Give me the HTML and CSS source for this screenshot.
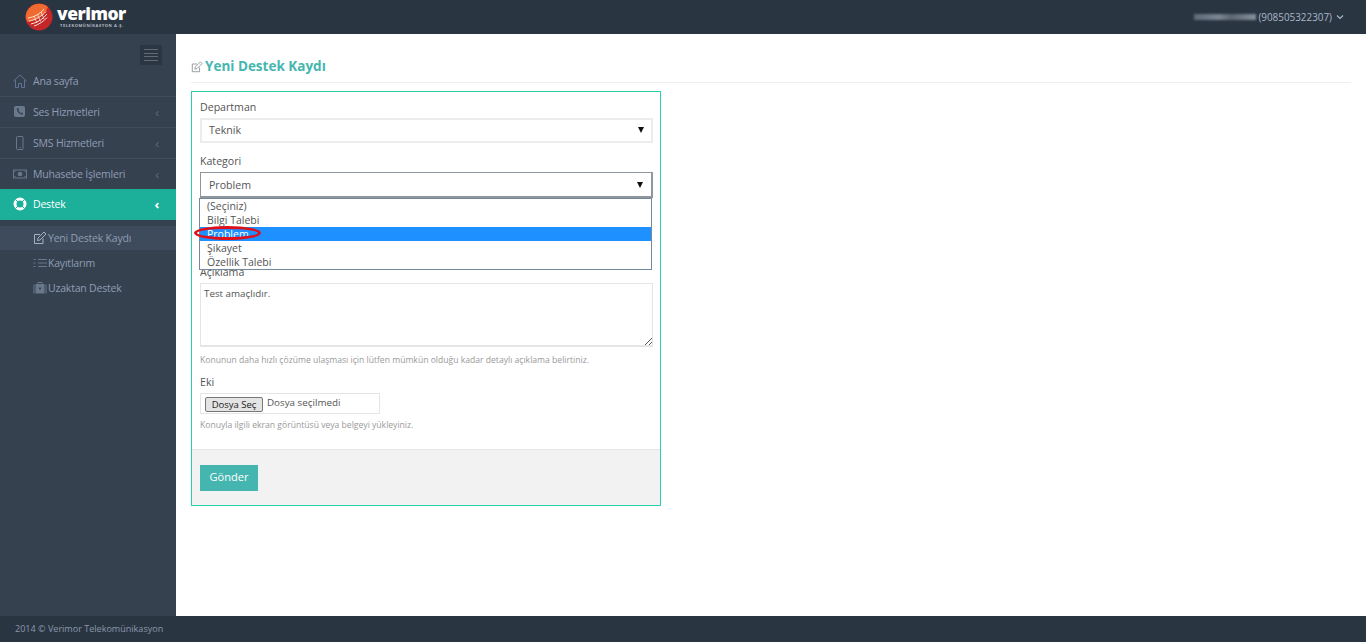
FILE: index.html
```html
<!DOCTYPE html>
<html lang="tr">
<head>
<meta charset="utf-8">
<title>Yeni Destek Kaydı</title>
<link rel="stylesheet" href="styles.css">
</head>
<body>
<header class="topbar">
  <div class="brand">
    <svg class="brand-mark" width="28" height="28" viewBox="0 0 28 28">
      <circle cx="14" cy="14" r="13.5" fill="#c4262a"/>
      <path d="M.8 12C2 5.500 7.500.8 14 .8c3.500 0 6.500 1.200 9 3.200-2 5-5 8-9 10.500-4 2-8 4-11.500 4.500C1 16.500.5 14.500.8 12z" fill="#ee6a30"/>
      <path d="M3 15c6-1 12-4 16-9M4 18c7-1 13-5 17-9.500M6 21c7-1.500 12-5 16-10M9 23c5-1.500 10-5 13-8.500" stroke="#f8e2d2" stroke-width="1" fill="none"/>
      <path d="M9 13l3 7M12.500 11.500l3 7M16 9l3 7" stroke="#f8e2d2" stroke-width=".8" fill="none"/>
    </svg>
    <div class="brand-text">
      <span class="brand-name">verimor</span>
      <span class="brand-sub">TELEKOMÜNİKASYON A.Ş.</span>
    </div>
  </div>
  <div class="account">
    <span class="redacted"></span>
    <span class="phone">(908505322307)</span>
    <svg width="8" height="6" viewBox="0 0 8 6"><path d="M1 1.500 4 4.500 7 1.500" fill="none" stroke="#a9b6c6" stroke-width="1.200"/></svg>
  </div>
</header>
<div class="shell">
  <aside class="sidebar">
    <div class="toggle-row">
      <div class="toggle"><span></span><span></span><span></span><span></span></div>
    </div>
    <nav>
      <a class="nav-item">
        <svg class="nav-icon" viewBox="0 0 14 14"><path d="M.5 7 7 1l6.500 6M2.500 6v7.500h3v-4h3v4h3V6" fill="none" stroke="#5f7396" stroke-width="1"/></svg>
        <span class="nav-label">Ana sayfa</span>
      </a>
      <a class="nav-item">
        <svg class="nav-icon" viewBox="0 0 14 14"><rect x="1" y="1" width="11" height="11" rx="2" fill="#69788a"/><path d="M4 3c-.5 3.500 2.500 7 6 6.500l-.5-2-2 .5-2-2.500 .7-1.800z" fill="#364150"/></svg>
        <span class="nav-label">Ses Hizmetleri</span>
        <span class="chev">‹</span>
      </a>
      <a class="nav-item">
        <svg class="nav-icon" viewBox="0 0 14 14"><rect x="3.500" y=".5" width="6.500" height="13" rx="1" fill="none" stroke="#69788a"/><path d="M6.500 11.500h1" stroke="#69788a"/></svg>
        <span class="nav-label">SMS Hizmetleri</span>
        <span class="chev">‹</span>
      </a>
      <a class="nav-item">
        <svg class="nav-icon" viewBox="0 0 14 14"><rect x=".5" y="3" width="13" height="8" fill="none" stroke="#69788a"/><circle cx="7" cy="7" r="2.300" fill="#69788a"/><path d="M1.500 4.500h1M11.500 4.500h1M1.500 9.500h1M11.500 9.500h1" stroke="#69788a"/></svg>
        <span class="nav-label">Muhasebe İşlemleri</span>
        <span class="chev">‹</span>
      </a>
      <a class="nav-item nav-item-active">
        <svg class="nav-icon" viewBox="0 0 14 14"><circle cx="7" cy="7" r="5" fill="none" stroke="#fff" stroke-width="3"/><path d="M2.500 2.500l2.500 2.500M11.500 2.500 9 5M2.500 11.500 5 9M11.500 11.500 9 9" stroke="#1caf9a" stroke-width="1"/></svg>
        <span class="nav-label">Destek</span>
        <span class="chev">‹</span>
      </a>
    </nav>
    <ul class="subnav">
      <li class="sub-item sub-item-active">
        <svg class="sub-icon" viewBox="0 0 14 14"><path d="M10 7.500V12.500H1.500V3.500H7" fill="none" stroke="#a4b0c0" stroke-width="1"/><path d="M5 7 11 1l2 2-6 6-2.500.5z" fill="none" stroke="#a4b0c0" stroke-width="1"/></svg>
        <span>Yeni Destek Kaydı</span>
      </li>
      <li class="sub-item">
        <svg class="sub-icon" viewBox="0 0 14 14"><path d="M5 3.500h9M5 7h9M5 10.500h9M.5 3.500h2M.5 7h2M.5 10.500h2" stroke="#69788a" stroke-width="1"/></svg>
        <span>Kayıtlarım</span>
      </li>
      <li class="sub-item">
        <svg class="sub-icon" viewBox="0 0 14 14"><rect x="2.500" y="3" width="9" height="9.500" fill="#69788a"/><rect x="5" y="1.500" width="4" height="2" fill="none" stroke="#69788a"/><path d="M1 3.500v9M13 3.500v9" stroke="#69788a"/><rect x="6" y="6.500" width="2" height="2" fill="#364150"/></svg>
        <span>Uzaktan Destek</span>
      </li>
    </ul>
  </aside>
  <main class="content">
    <h1 class="page-title">
      <svg class="title-icon" viewBox="0 0 14 14"><path d="M10 7.500V12.500H1.500V3.500H7" fill="none" stroke="#8a8f94" stroke-width="1"/><path d="M5 7 11 1l2 2-6 6-2.500.5z" fill="none" stroke="#8a8f94" stroke-width="1"/></svg>
      <span>Yeni Destek Kaydı</span>
    </h1>
    <section class="panel">
      <div class="panel-body">
        <div class="field field-dept">
          <div class="label">Departman</div>
          <div class="select"><span>Teknik</span><i class="arrow"></i></div>
        </div>
        <div class="field field-cat">
          <div class="label">Kategori</div>
          <div class="select select-open"><span>Problem</span><i class="arrow"></i></div>
          <ul class="dropdown">
            <li>(Seçiniz)</li>
            <li>Bilgi Talebi</li>
            <li class="selected">Problem</li>
            <li>Şikayet</li>
            <li>Özellik Talebi</li>
          </ul>
          <div class="ring"></div>
        </div>
        <div class="field field-desc">
          <div class="label">Açıklama</div>
          <div class="textarea">Test amaçlıdır.
            <svg class="grip" width="8" height="8" viewBox="0 0 8 8"><path d="M1 8 8 1M5 8 8 5" stroke="#555" stroke-width="1"/></svg>
          </div>
          <p class="help">Konunun daha hızlı çözüme ulaşması için lütfen mümkün olduğu kadar detaylı açıklama belirtiniz.</p>
        </div>
        <div class="field field-file">
          <div class="label">Eki</div>
          <div class="file"><span class="file-btn">Dosya Seç</span><span class="file-name">Dosya seçilmedi</span></div>
          <p class="help help-file">Konuyla ilgili ekran görüntüsü veya belgeyi yükleyiniz.</p>
        </div>
      </div>
      <div class="panel-foot"><span class="btn">Gönder</span></div>
    </section>
  </main>
</div>
<footer class="footer">2014 © Verimor Telekomünikasyon</footer>
</body>
</html>
```
FILE: styles.css
```css
* { box-sizing: border-box; }
html, body { margin: 0; padding: 0; height: 100%; }
body {
  display: flex;
  flex-direction: column;
  height: 642px;
  overflow: hidden;
  font-family: "Open Sans", sans-serif;
  font-size: 11px;
  color: #555;
  background: #fff;
}
.topbar {
  flex: 0 0 34px;
  display: flex;
  align-items: center;
  justify-content: space-between;
  padding: 0 22px 0 25px;
  background: #2a3542;
}
.brand { display: flex; align-items: center; gap: 4px; }
.brand-mark { display: block; }
.brand-text { display: flex; flex-direction: column; margin-top: -2px; }
.brand-name {
  font-size: 17.500px;
  font-weight: 800;
  line-height: 17px;
  color: #fff;
  letter-spacing: -0.5px;
}
.brand-sub {
  width: 70px;
  margin-top: 1px;
  white-space: nowrap;
  font-size: 4px;
  font-weight: 700;
  line-height: 5px;
  letter-spacing: 0.6px;
  color: #b5bcc4;
  padding-left: 3px;
}
.account { display: flex; align-items: center; font-size: 9.900px; color: #a9b6c6; }
.phone { margin-left: 2px; margin-right: 4px; }
.redacted {
  display: block;
  width: 62px;
  height: 6px;
  background: linear-gradient(90deg, #5d6a78, #7b8692 40%, #5c6671 60%, #87919c);
  filter: blur(1px);
}
.shell { flex: 1 1 auto; display: flex; min-height: 0; }
.sidebar { flex: 0 0 176px; background: #364150; }
.toggle-row { display: flex; justify-content: flex-end; padding: 11px 14px 0 0; height: 32px; }
.toggle {
  width: 22px;
  height: 20px;
  padding: 4px 4px;
  display: flex;
  flex-direction: column;
  justify-content: space-between;
  background: #2c3643;
}
.toggle span { display: block; height: 1px; background: #5d6a78; }
.nav-item {
  display: flex;
  align-items: center;
  height: 31px;
  padding: 0 13px;
  border-bottom: 1px solid #414d5c;
  color: #8e9db3;
  font-size: 10.500px;
  letter-spacing: -0.2px;
}
.nav-item:nth-child(4) { border-bottom: 0; height: 30px; }
.nav-icon { width: 14px; height: 14px; flex: none; margin-right: 6px; }
.nav-label { flex: 1; }
.chev { width: 10px; margin-right: 4px; font-size: 13px; line-height: 12px; color: #5c6b7e; text-align: right; }
.nav-item-active {
  height: 31px;
  padding-bottom: 2px;
  background: #1caf9a;
  color: #fff;
  border-bottom: 0;
}
.nav-item-active .chev { color: #fff; font-weight: 700; }
.subnav { list-style: none; margin: 6px 0 0; padding: 0; }
.sub-item {
  display: flex;
  align-items: center;
  height: 24px;
  margin-bottom: 1px;
  padding-left: 33px;
  color: #8e9db3;
  font-size: 10.500px;
  letter-spacing: -0.2px;
}
.sub-item-active { background: #3e4b5c; }
.sub-icon { width: 14px; height: 14px; flex: none; margin-right: 1px; }
.content { flex: 1; min-width: 0; padding: 0 15px; }
.page-title {
  display: flex;
  align-items: center;
  height: 49px;
  margin: 0;
  padding-top: 15px;
  border-bottom: 1px solid #eee;
  font-size: 13.500px;
  font-weight: 700;
  line-height: 20px;
  color: #45b6af;
}
.title-icon { width: 12px; height: 12px; margin-right: 2px; margin-top: 2px; }
.panel {
  width: 470px;
  height: 415px;
  margin-top: 8px;
  display: flex;
  flex-direction: column;
  border: 1px solid #2bd1ad;
}
.panel-body { flex: 1; padding: 7px 7px 0 8px; }
.field { position: relative; }
.label { height: 19px; line-height: 16px; font-size: 10.600px; color: #555; }
.select {
  display: flex;
  align-items: center;
  justify-content: space-between;
  height: 25px;
  padding: 0 7px 1px;
  border: 2px solid #ececec;
  font-size: 10.600px;
  color: #555;
}
.select-open { height: 26px; border: 1px solid #8f969c; border-width: 1px 2px 2px 1px; padding: 0 8px; }
.arrow {
  width: 0;
  height: 0;
  margin-right: 0;
  border-left: 3.500px solid transparent;
  border-right: 3.500px solid transparent;
  border-top: 6px solid #111;
}
.field-cat { margin-top: 10px; }
.dropdown {
  position: absolute;
  left: -1px;
  right: 1px;
  top: 45px;
  z-index: 2;
  margin: 0;
  padding: 0;
  list-style: none;
  background: #fff;
  border: 1px solid #76899c;
}
.dropdown li { height: 14px; line-height: 14px; padding-left: 7px; font-size: 10.500px; color: #555; }
.dropdown li.selected { background: #1e90ff; color: #fff; }
.ring {
  position: absolute;
  left: -6px;
  top: 73px;
  z-index: 3;
  width: 67px;
  height: 14px;
  border: 3px solid #e0101a;
  border-radius: 50%;
}
.field-desc { margin-top: 69px; }
.field-desc .label { height: 16px; line-height: 10px; }
.textarea {
  position: relative;
  height: 64px;
  padding: 3px 3px;
  border: 1px solid #e5e5e5;
  border-width: 1px 1px 2px 1px;
  font-size: 9.800px;
  color: #555;
}
.grip { position: absolute; right: 0; bottom: 0; }
.help { margin: 7px 0 0; font-size: 8.600px; line-height: 12px; color: #9a9a9a; }
.field-file { margin-top: 8px; }
.field-file .label { height: 19px; }
.file {
  display: flex;
  align-items: flex-start;
  width: 180px;
  height: 21px;
  padding: 3px 4px;
  border: 1px solid #e5e5e5;
}
.file-btn {
  width: 58px;
  height: 15px;
  line-height: 13px;
  text-align: center;
  border: 1px solid #767676;
  border-radius: 2px;
  background: #e4e4e4;
  font-size: 9.500px;
  color: #222;
}
.file-name { margin-left: 4px; margin-top: -1px; font-size: 9.800px; color: #555; }
.help-file { margin-top: 5px; }
.panel-foot {
  flex: 0 0 56px;
  padding: 15px 8px 0;
  background: #f2f2f2;
  border-top: 1px solid #e5e5e5;
}
.btn {
  display: block;
  width: 58px;
  height: 26px;
  line-height: 24px;
  text-align: center;
  background: #45b6af;
  color: #fff;
  font-size: 11px;
}
.footer {
  flex: 0 0 26px;
  padding: 6px 0 0 15px;
  background: #2a3542;
  color: #8a98ab;
  font-size: 9.050px;
  line-height: 13px;
}
```
